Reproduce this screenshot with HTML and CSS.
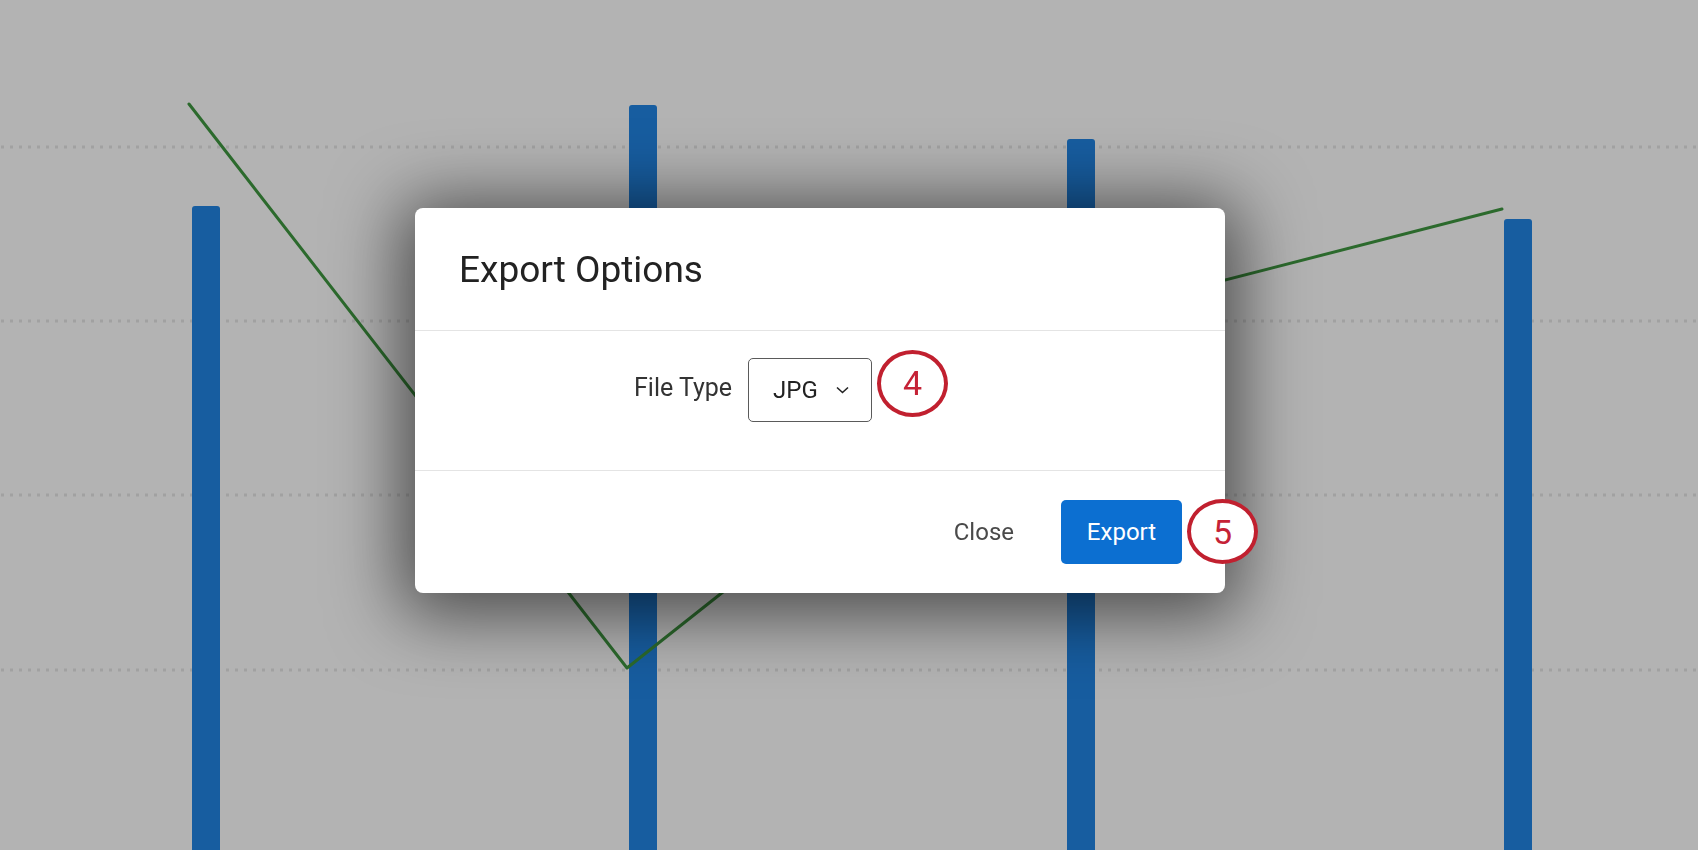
FILE: index.html
```html
<!DOCTYPE html>
<html lang="en">
<head>
    <meta charset="UTF-8">
    <meta name="viewport" content="width=device-width, initial-scale=1.0">
    <title>Export Options</title>
    <link rel="stylesheet" href="styles.css">
</head>
<body>
    <!-- Chart behind the dialog -->
    <div class="chart">
        <svg viewBox="0 0 1698 850" width="1698" height="850" aria-hidden="true">
            <g class="grid">
                <line x1="1" y1="147" x2="1698" y2="147"/>
                <line x1="1" y1="321" x2="1698" y2="321"/>
                <line x1="1" y1="495" x2="1698" y2="495"/>
                <line x1="1" y1="670" x2="1698" y2="670"/>
            </g>
            <g class="bars">
                <rect x="192" y="206" width="28" height="700" rx="3"/>
                <rect x="629" y="105" width="28" height="800" rx="3"/>
                <rect x="1067" y="139" width="28" height="800" rx="3"/>
                <rect x="1504" y="219" width="28" height="700" rx="3"/>
            </g>
            <polyline class="trend" points="189,104 627,668 1065,321 1502,209"/>
        </svg>
    </div>

    <div class="overlay">
        <div class="modal" role="dialog" aria-labelledby="modal-title">
            <div class="modal-header">
                <h2 id="modal-title">Export Options</h2>
            </div>
            <div class="modal-body">
                <div class="field">
                    <label for="file-type">File Type</label>
                    <button id="file-type" class="select">
                        <span>JPG</span>
                        <svg width="13" height="8" viewBox="0 0 13 8"><path d="M1 1.5l5.5 5 5.5-5" fill="none" stroke="#222" stroke-width="1.6"/></svg>
                    </button>
                    <span class="marker marker-inline">4</span>
                </div>
            </div>
            <div class="modal-footer">
                <button class="btn-close">Close</button>
                <div class="export-wrap">
                    <button class="btn-export">Export</button>
                    <span class="marker marker-float">5</span>
                </div>
            </div>
        </div>
    </div>
</body>
</html>
```

FILE: styles.css
```css
body {
    margin: 0;
    width: 1698px;
    height: 850px;
    overflow: hidden;
    background: #b3b3b3;
    font-family: Roboto, "Liberation Sans", Arial, sans-serif;
}

.chart svg {
    display: block;
}

.grid line {
    stroke: #a1a1a1;
    stroke-width: 3;
    stroke-dasharray: 3 6;
}

.bars rect {
    fill: #175da0;
}

.trend {
    fill: none;
    stroke: #2c6a2d;
    stroke-width: 3;
    stroke-linecap: round;
    stroke-linejoin: round;
}

.overlay {
    position: fixed;
    top: 0;
    left: 0;
    right: 0;
    bottom: 0;
    display: flex;
    align-items: flex-start;
    padding: 208px 0 0 415px;
}

.modal {
    width: 810px;
    background: #fff;
    border-radius: 8px;
    box-shadow: 0 8px 70px 14px rgba(0, 0, 0, 0.58);
}

.modal-header {
    height: 123px;
    box-sizing: border-box;
    display: flex;
    align-items: center;
    padding: 0 44px;
    border-bottom: 1px solid #e4e4e4;
}

.modal-header h2 {
    margin: 0;
    font-size: 37px;
    font-weight: 400;
    color: #222;
    line-height: 1;
}

.modal-body {
    height: 140px;
    box-sizing: border-box;
    padding: 27px 0 0 219px;
    border-bottom: 1px solid #e4e4e4;
}

.field {
    display: flex;
    align-items: center;
    height: 64px;
}

.field label {
    font-size: 25px;
    color: #333;
    margin: 0 16px 6px 0;
}

.select {
    width: 124px;
    height: 64px;
    box-sizing: border-box;
    display: flex;
    align-items: center;
    gap: 18px;
    padding: 0 0 0 24px;
    background: #fff;
    border: 1px solid #5a5a5a;
    border-radius: 5px;
    font-family: inherit;
    font-size: 24px;
    color: #222;
    cursor: pointer;
}

.marker {
    box-sizing: border-box;
    display: flex;
    align-items: center;
    justify-content: center;
    border: 4px solid #c1202f;
    border-radius: 50%;
    background: #fff;
    color: #c52236;
    font-size: 34px;
}

.marker-inline {
    flex: none;
    width: 71px;
    height: 67px;
    margin: -13px 0 1px 5px;
}

.modal-footer {
    height: 122px;
    display: flex;
    justify-content: flex-end;
    align-items: center;
    padding-right: 43px;
}

.btn-close {
    height: 64px;
    padding: 0 24px;
    margin-right: 23px;
    background: none;
    border: none;
    font-family: inherit;
    font-size: 24px;
    color: #4a4a4a;
    cursor: pointer;
}

.export-wrap {
    position: relative;
}

.btn-export {
    display: block;
    width: 121px;
    height: 64px;
    background: #0c6fd1;
    border: none;
    border-radius: 5px;
    font-family: inherit;
    font-size: 24px;
    color: #fff;
    cursor: pointer;
}

.marker-float {
    position: absolute;
    left: calc(100% + 5px);
    top: -1px;
    width: 71px;
    height: 65px;
}
```
